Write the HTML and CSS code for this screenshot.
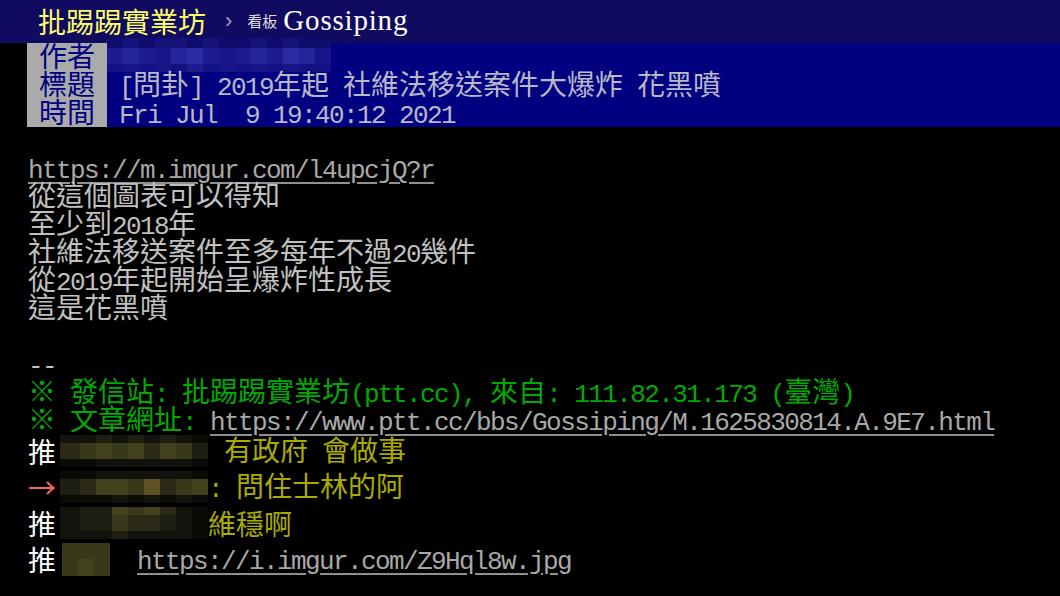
FILE: index.html
```html
<!DOCTYPE html>
<html lang="zh-Hant">
<head>
<meta charset="utf-8">
<title>Gossiping - 批踢踢實業坊</title>
<link rel="stylesheet" href="styles.css">
</head>
<body>
<div class="topbar">
  <span class="logo">批踢踢實業坊</span>
  <span class="sep">›</span>
  <span class="board-label">看板</span>
  <span class="board-name">Gossiping</span>
</div>

<div class="meta">
  <div class="meta-line">
    <span class="tag">作者</span>
    <span class="value value-author">
      <span class="mosaic mosaic-author">
        <i class="b0"></i><i class="b1"></i><i class="b0"></i><i class="b1"></i><i class="b1"></i><i class="b0"></i><i class="b1"></i><i class="b0"></i><i class="b0"></i><i class="b1"></i><i class="b0"></i><i class="b1"></i><i class="b0"></i><i class="b0"></i>
        <i class="b2"></i><i class="b3"></i><i class="b2"></i><i class="b5"></i><i class="b3"></i><i class="b4"></i><i class="b2"></i><i class="b5"></i><i class="b2"></i><i class="b3"></i><i class="b2"></i><i class="b4"></i><i class="b3"></i><i class="b5"></i>
        <i class="b6"></i><i class="b5"></i><i class="b6"></i><i class="b5"></i><i class="b6"></i><i class="b2"></i><i class="b6"></i><i class="b5"></i><i class="b6"></i><i class="b5"></i><i class="b6"></i><i class="b5"></i><i class="b6"></i><i class="b6"></i>
      </span>
    </span>
  </div>
  <div class="meta-line">
    <span class="tag">標題</span>
    <span class="value"><span class="en">[</span>問卦<span class="en">] 2019</span>年起<span class="en"> </span>社維法移送案件大爆炸<span class="en"> </span>花黑噴</span>
  </div>
  <div class="meta-line">
    <span class="tag">時間</span>
    <span class="value"><span class="en">Fri Jul  9 19:40:12 2021</span></span>
  </div>
</div>

<div class="content">
  <div class="line"><a class="link en" href="#">https://m.imgur.com/l4upcjQ?r</a></div>
  <div class="line">從這個圖表可以得知</div>
  <div class="line">至少到<span class="en">2018</span>年</div>
  <div class="line">社維法移送案件至多每年不過<span class="en">20</span>幾件</div>
  <div class="line">從<span class="en">2019</span>年起開始呈爆炸性成長</div>
  <div class="line">這是花黑噴</div>
  <div class="line"></div>
  <div class="line"><span class="en">--</span></div>
  <div class="line green">※<span class="en"> </span>發信站<span class="en">: </span>批踢踢實業坊<span class="en">(ptt.cc), </span>來自<span class="en">: 111.82.31.173 (</span>臺灣<span class="en">)</span></div>
  <div class="line green">※<span class="en"> </span>文章網址<span class="en">: </span><a class="link en" href="#">https://www.ptt.cc/bbs/Gossiping/M.1625830814.A.9E7.html</a></div>

  <div class="push">
    <span class="push-tag">推</span>
    <span class="mosaic mosaic-push">
      <i class="y1"></i><i class="y1"></i><i class="y2"></i><i class="y1"></i><i class="y2"></i><i class="y1"></i><i class="y2"></i><i class="y1"></i><i class="y0"></i>
      <i class="y3"></i><i class="y4"></i><i class="y5"></i><i class="y4"></i><i class="y5"></i><i class="y3"></i><i class="y5"></i><i class="y4"></i><i class="y2"></i>
      <i class="y0"></i><i class="y0"></i><i class="y1"></i><i class="y1"></i><i class="y1"></i><i class="y1"></i><i class="y1"></i><i class="y1"></i><i class="y0"></i>
    </span>
    <span class="push-content push-content-1">有政府<span class="en"> </span>會做事</span>
  </div>
  <div class="push">
    <span class="push-tag arrow">→</span>
    <span class="mosaic mosaic-push">
      <i class="y0"></i><i class="y0"></i><i class="y1"></i><i class="y1"></i><i class="y1"></i><i class="y1"></i><i class="y1"></i><i class="y1"></i><i class="y0"></i>
      <i class="y2"></i><i class="y3"></i><i class="y5"></i><i class="y5"></i><i class="y4"></i><i class="y7"></i><i class="y3"></i><i class="y4"></i><i class="y5"></i>
      <i class="y0"></i><i class="y0"></i><i class="y0"></i><i class="y1"></i><i class="y0"></i><i class="y1"></i><i class="y0"></i><i class="y1"></i><i class="y0"></i>
    </span>
    <span class="push-content"><span class="en">: </span>問住士林的阿</span>
  </div>
  <div class="push">
    <span class="push-tag">推</span>
    <span class="mosaic mosaic-push">
      <i class="y1"></i><i class="y2"></i><i class="y2"></i><i class="y5"></i><i class="y4"></i><i class="y5"></i><i class="y3"></i><i class="y1"></i><i class="y0"></i>
      <i class="y1"></i><i class="y2"></i><i class="y2"></i><i class="y4"></i><i class="y3"></i><i class="y3"></i><i class="y2"></i><i class="y1"></i><i class="y0"></i>
      <i class="y1"></i><i class="y1"></i><i class="y1"></i><i class="y2"></i><i class="y1"></i><i class="y1"></i><i class="y1"></i><i class="y1"></i><i class="y0"></i>
    </span>
    <span class="push-content">維穩啊</span>
  </div>
  <div class="push">
    <span class="push-tag">推</span>
    <span class="mosaic mosaic-short">
      <i class="y4"></i><i class="y4"></i><i class="y4"></i>
      <i class="y4"></i><i class="y5"></i><i class="y4"></i>
    </span>
    <span class="push-content push-content-4"><a class="link en" href="#">https://i.imgur.com/Z9Hql8w.jpg</a></span>
  </div>
</div>
</body>
</html>
```

FILE: styles.css
```css
html, body {
  margin: 0;
  padding: 0;
  background: #000;
}

body {
  color: #c0c0c0;
  font-family: "Noto Sans CJK TC", "Noto Sans CJK JP", sans-serif;
  font-size: 28px;
  overflow: hidden;
}

/* half-width (ASCII) runs: one cell = 14px */
.en {
  font-family: "Liberation Mono", "DejaVu Sans Mono", monospace;
  font-size: 26px;
  letter-spacing: -1.6px;
  white-space: pre;
}

/* top bar */
.topbar {
  height: 43px;
  background: #100b60;
  display: flex;
  align-items: center;
  padding-left: 38px;
  padding-bottom: 2px;
  box-sizing: border-box;
}

.logo {
  color: #ffff66;
  font-size: 28px;
  line-height: 1;
}

.sep {
  color: #a0a0b8;
  font-family: "Liberation Sans", sans-serif;
  font-size: 22px;
  margin-left: 19px;
  line-height: 1;
}

.board-label {
  color: #dddddd;
  font-size: 15px;
  margin-left: 15px;
  line-height: 1;
}

.board-name {
  color: #ffffff;
  font-family: "Liberation Serif", serif;
  font-size: 29px;
  letter-spacing: 0.8px;
  margin-left: 6px;
  line-height: 1;
}

/* meta header */
.meta {
  margin-left: 27px;
  background: #000080;
}

.meta-line {
  display: flex;
  height: 28px;
  line-height: 24px;
}

.tag {
  flex: 0 0 80px;
  background: #aaaaaa;
  color: #000080;
  text-align: center;
}

.value {
  padding-left: 12px;
  color: #b8b8c8;
  white-space: nowrap;
}

.value-author {
  padding-left: 0;
}

/* mosaics (pixelated user ids) */
.mosaic {
  display: grid;
  flex: none;
}

.mosaic i {
  display: block;
}

.mosaic-author {
  grid-template-columns: repeat(14, 16px);
  grid-template-rows: 10px 16px 8px;
  margin-top: -5px;
}

.mosaic-push {
  grid-template-columns: 20px repeat(8, 16px);
  grid-template-rows: 8px 16px 8px;
}

.mosaic-short {
  grid-template-columns: repeat(3, 16px);
  grid-template-rows: 16px 17px;
  margin-left: 2px;
}

.b0 { background: #0f0c6c; }
.b1 { background: #151279; }
.b2 { background: #1c1c8e; }
.b3 { background: #24249b; }
.b4 { background: #2b2ba3; }
.b5 { background: #17178a; }
.b6 { background: #121285; }

.y0 { background: #0a0a06; }
.y1 { background: #13130d; }
.y2 { background: #1e1e12; }
.y3 { background: #2a2a16; }
.y4 { background: #38381a; }
.y5 { background: #43421d; }
.y6 { background: #4c4820; }
.y7 { background: #5c5222; }

/* body */
.content {
  padding: 27px 0 0 28px;
}

.line {
  height: 28px;
  line-height: 24px;
  white-space: nowrap;
}

.link {
  color: #a8a8a8;
  text-decoration: underline;
  text-decoration-color: #909090;
  text-underline-offset: 4px;
}

.green {
  color: #00aa00;
}

/* pushes */
.push {
  display: flex;
  align-items: center;
  height: 36px;
  line-height: 24px;
  padding-bottom: 2px;
  box-sizing: border-box;
  white-space: nowrap;
}

.push-tag {
  flex: 0 0 32px;
  color: #ffffff;
}

.push-tag.arrow {
  color: #ff6666;
}

.push-content {
  color: #aaaa00;
}

.push-content-1 {
  margin-left: 16px;
}

.push-content-4 {
  margin-left: 27px;
}
```
